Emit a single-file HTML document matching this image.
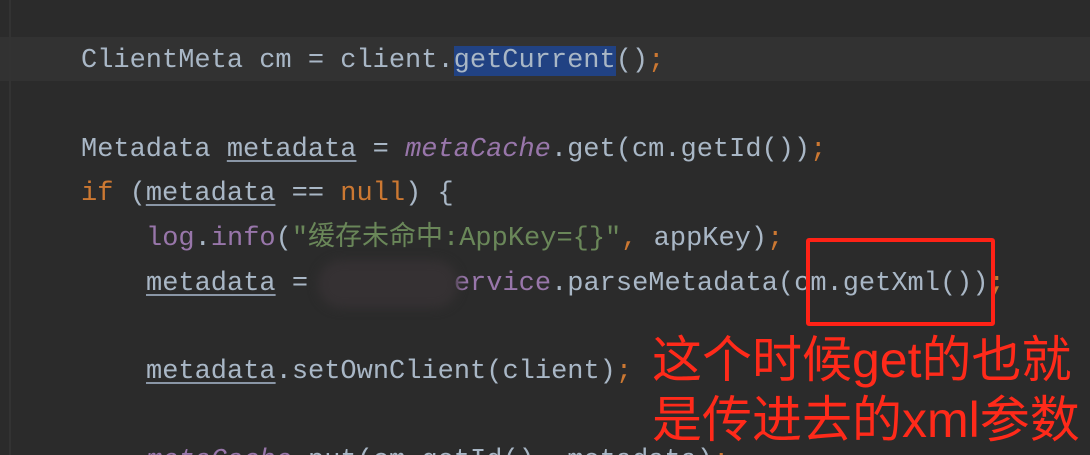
<!DOCTYPE html>
<html style="height:455px;overflow:hidden"><head><meta charset="utf-8"><style>
html,body{margin:0;padding:0}
#w{width:1090px;height:455px;background:#2b2b2b;overflow:hidden;position:relative;font-family:"Liberation Mono","Noto Sans CJK SC",monospace;font-size:27px;color:#a9b7c6}
.hl{position:absolute;left:0;top:37px;width:1090px;height:44px;background:#323232}
.g{position:absolute;left:9px;top:0;width:2px;height:455px;background:#333}
.ln{position:absolute;left:81px;white-space:pre;line-height:44px;height:44px}
.k{color:#cc7832}.u{text-decoration:underline;text-decoration-color:#8a96a6;text-underline-offset:4px}
.p{color:#9876aa;font-style:italic}.m{color:#9876aa}.s{color:#6a8759}
.sel{background:#214283}
.box{position:absolute;left:806px;top:238px;width:181px;height:80px;border:4px solid #ff2216;border-radius:3px}
.red{position:absolute;left:652px;color:#ff2a1a;font-family:"Liberation Sans","Noto Sans CJK SC",sans-serif;font-size:50px;line-height:56px;white-space:pre}
.blur{position:absolute;left:318px;top:260px;width:140px;height:48px;border-radius:24px;background:#353133;filter:blur(5px)}
</style></head><body><div id="w">
<div class="hl"></div><div class="g"></div>
<div class="ln" style="top:39px">ClientMeta cm = client.<span class="sel">getCurrent</span>()<span class="k">;</span></div>
<div class="ln" style="top:128px">Metadata <span class="u">metadata</span> = <span class="p">metaCache</span>.get(cm.getId())<span class="k">;</span></div>
<div class="ln" style="top:172px"><span class="k">if</span> (<span class="u">metadata</span> == <span class="k">null</span>) {</div>
<div class="ln" style="top:217px;left:146px"><span class="m">log</span>.<span class="m">info</span>(<span class="s">"缓存未命中:AppKey={}"</span><span class="k">,</span> appKey)<span class="k">;</span></div>
<div class="ln" style="top:262px;left:146px"><span class="u">metadata</span> =         <span class="m">ervice</span>.parseMetadata(cm.getXml())<span class="k">;</span></div>
<div class="blur"></div>
<div class="ln" style="top:350px;left:146px"><span class="u">metadata</span>.setOwnClient(client)<span class="k">;</span></div>
<div class="ln" style="top:439px;left:146px;height:16px;overflow:hidden"><span class="p">metaCache</span>.put(cm.getId()<span class="k">,</span> metadata)<span class="k">;</span></div>
<div class="box"></div>
<div class="red" style="top:332px">这个时候get的也就</div>
<div class="red" style="top:392px;height:63px;overflow:hidden">是传进去的xml参数</div>
</div></body></html>
